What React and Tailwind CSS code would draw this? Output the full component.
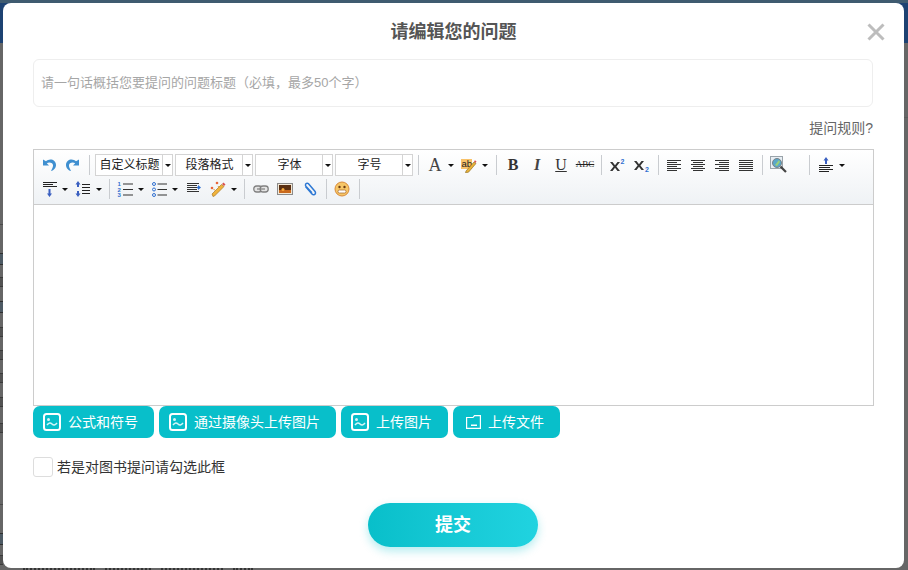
import React from "react";

const FONT = "font-['Liberation_Sans','Noto_Sans_CJK_SC',sans-serif]";

function Arrow() {
  return (
    <svg width="6" height="3" viewBox="0 0 6 3" className="shrink-0"><path d="M0 0h6L3 3z" fill="#111" /></svg>
  );
}

function Ico({ children, w = "w-[24px]" }) {
  return <div className={`${w} h-[24px] flex items-center justify-center shrink-0`}>{children}</div>;
}

function Drop() {
  return <div className="w-[10px] h-[24px] flex items-center pl-[1px] shrink-0"><Arrow /></div>;
}

function Sep({ w }) {
  return (
    <div className={`${w} h-[24px] flex items-center justify-center shrink-0`}>
      <div className="w-px h-[20px] bg-[#c9ccd0]" />
    </div>
  );
}

function Combo({ label, first }) {
  return (
    <div className={`w-[78px] h-[22px] flex border border-[#d4d4d4] bg-white shrink-0 ${first ? "" : "ml-[2px]"}`}>
      <div className="w-[67px] pl-[1px] text-center text-[12px] leading-[20px] text-[#222] border-r border-[#d4d4d4] whitespace-nowrap overflow-hidden">{label}</div>
      <div className="flex-1 flex items-center justify-center"><Arrow /></div>
    </div>
  );
}

const S = { width: 16, height: 16, viewBox: "0 0 16 16" };

const Undo = () => (
  <svg {...S}><path d="M2 2.500v6h6L5.800 6.300C7 5.200 9.500 5 11 6.300c1.400 1.200 1.300 3.300.2 5.200L10 14c3-.6 5-3.300 5-6 0-3.500-2.800-5.500-5.500-5.500-1.800 0-3.300.7-4.500 1.800z" fill="#3f8fd0" /></svg>
);
const Redo = () => (
  <svg {...S}><path d="M14 2.500v6H8l2.200-2.200C9 5.200 6.500 5 5 6.300c-1.400 1.200-1.300 3.300-.2 5.200L6 14c-3-.6-5-3.300-5-6 0-3.500 2.800-5.500 5.500-5.500 1.800 0 3.300.7 4.500 1.800z" fill="#3f8fd0" /></svg>
);
const Lines = ({ rows }) => (
  <svg {...S}>{rows.map(([x, y, w], i) => <rect key={i} x={x} y={y} width={w} height="1" fill="#333" />)}</svg>
);
const AlignL = () => <Lines rows={[[1, 3, 14], [1, 5, 10], [1, 7, 14], [1, 9, 10], [1, 11, 14], [1, 13, 10]]} />;
const AlignC = () => <Lines rows={[[1, 3, 14], [3, 5, 10], [1, 7, 14], [3, 9, 10], [1, 11, 14], [3, 13, 10]]} />;
const AlignR = () => <Lines rows={[[1, 3, 14], [5, 5, 10], [1, 7, 14], [5, 9, 10], [1, 11, 14], [5, 13, 10]]} />;
const AlignJ = () => <Lines rows={[[1, 3, 14], [1, 5, 14], [1, 7, 14], [1, 9, 14], [1, 11, 14], [1, 13, 14]]} />;

const FontColor = () => (
  <span className="font-['Liberation_Serif',serif] text-[18px] leading-[16px] text-[#444]">A</span>
);
const Highlight = () => (
  <svg {...S}>
    <rect x="0" y="2" width="11" height="10" fill="#f8c26a" />
    <text x=".5" y="10" fontSize="9.500" fontFamily="Liberation Sans" fill="#222">ab</text>
    <path d="M5 14 13 5l2 1.500L7.500 15.200 4.500 15.800z" fill="#e8b23a" stroke="#8a6a20" strokeWidth=".6" />
    <path d="M13 4.500l1-1.200 1.500 1.200-1 1.500z" fill="#d9534f" />
  </svg>
);
const Super = () => (
  <svg {...S}>
    <path d="M0 5h2.500L5 8.200 7.500 5H10L6.400 9.500 10 14H7.500L5 10.800 2.500 14H0l3.600-4.500z" fill="#333" />
    <text x="10.500" y="7" fontSize="7" fontWeight="bold" fontFamily="Liberation Sans" fill="#2f6fd0">2</text>
  </svg>
);
const Sub = () => (
  <svg {...S}>
    <path d="M0 4h2.500L5 7.200 7.500 4H10L6.400 8.500 10 13H7.500L5 9.800 2.500 13H0l3.600-4.500z" fill="#333" />
    <text x="11" y="14.500" fontSize="7" fontWeight="bold" fontFamily="Liberation Sans" fill="#2f6fd0">2</text>
  </svg>
);
const Search = () => (
  <svg width="18" height="18" viewBox="0 0 18 18">
    <rect x=".5" y=".5" width="12" height="12" fill="#e8eef3" stroke="#9aa3aa" />
    <circle cx="7" cy="7" r="4.500" fill="#5aa7c9" stroke="#7a8288" />
    <path d="M5 9l4-5 1 2-3 4z" fill="#9ad07a" />
    <path d="M10.500 10.500 16 16" stroke="#444" strokeWidth="2.200" />
  </svg>
);
const RowSpacingTop = () => (
  <svg {...S}>
    <path d="M8 0l2.500 3.500H9V7H7V3.500H5.500z" fill="#3a5fc0" />
    <rect x="1" y="8" width="14" height="1" fill="#222" />
    <rect x="1" y="10" width="11" height="1" fill="#222" />
    <rect x="1" y="12" width="14" height="1" fill="#222" />
    <rect x="1" y="14" width="10" height="1" fill="#222" />
  </svg>
);
const RowSpacingBottom = () => (
  <svg {...S}>
    <rect x="2" y="1" width="14" height="1" fill="#222" />
    <rect x="2" y="3" width="10" height="1" fill="#222" />
    <rect x="2" y="5" width="14" height="1" fill="#222" />
    <path d="M8.500 16 6 12.500h1.500V8h2v4.500H11z" fill="#3a5fc0" />
  </svg>
);
const LineHeight = () => (
  <svg width="16" height="16" viewBox="0 0 16 16">
    <path d="M3 0l2.500 3.500H4V6H2V3.500H.5zM3 16l2.500-3.500H4V10H2v2.500H.5z" fill="#3a5fc0" />
    <rect x="7" y="3" width="8" height="1" fill="#222" />
    <rect x="7" y="6" width="8" height="1" fill="#222" />
    <rect x="7" y="9" width="8" height="1" fill="#222" />
    <rect x="7" y="12" width="8" height="1" fill="#222" />
  </svg>
);
const Ol = () => (
  <svg {...S}>
    <g fill="#2f6fd0" fontSize="6" fontWeight="bold" fontFamily="Liberation Sans">
      <text x=".5" y="5">1</text><text x=".5" y="10.500">2</text><text x=".5" y="16">3</text>
    </g>
    <rect x="6" y="2.500" width="10" height="1" fill="#333" />
    <rect x="6" y="8" width="10" height="1" fill="#333" />
    <rect x="6" y="13.500" width="10" height="1" fill="#333" />
  </svg>
);
const Ul = () => (
  <svg {...S}>
    <g fill="none" stroke="#2f6fd0" strokeWidth="1">
      <circle cx="3" cy="3" r="1.500" /><circle cx="3" cy="8.500" r="1.500" /><circle cx="3" cy="14" r="1.500" />
    </g>
    <rect x="6.500" y="2.500" width="9.500" height="1" fill="#333" />
    <rect x="6.500" y="8" width="9.500" height="1" fill="#333" />
    <rect x="6.500" y="13.500" width="9.500" height="1" fill="#333" />
  </svg>
);
const Indent = () => (
  <svg {...S}>
    <rect x="2" y="2" width="12" height="1" fill="#333" />
    <rect x="2" y="4" width="10" height="1" fill="#333" />
    <rect x="2" y="6" width="10" height="1" fill="#333" />
    <rect x="2" y="8" width="10" height="1" fill="#333" />
    <rect x="2" y="10" width="12" height="1" fill="#333" />
    <path d="M16 6.500 13 4v1.700h-1v1.600h1V9z" fill="#2f6fd0" />
  </svg>
);
const Wand = () => (
  <svg {...S}>
    <path d="M3 15.500 2 13 11.500 3.500 14 5.500 4.500 15z" fill="#f0b33c" stroke="#a87a28" strokeWidth=".7" />
    <path d="M12 3l1.500-1.500 2 2L14 5z" fill="#d9534f" />
    <circle cx="2" cy="7" r="1.300" fill="#e8663c" />
    <circle cx="7" cy="2" r="1.300" fill="#e8663c" />
    <path d="M9 6.500 8 5M5 9 3.500 8.500" stroke="#e8a03c" />
  </svg>
);
const LinkIco = () => (
  <svg {...S}>
    <rect x=".8" y="5" width="8" height="6" rx="2.800" fill="#e4e4e4" stroke="#808080" strokeWidth="1.300" />
    <rect x="7.200" y="5" width="8" height="6" rx="2.800" fill="#e4e4e4" stroke="#808080" strokeWidth="1.300" />
    <rect x="4" y="7.400" width="8" height="1.200" fill="#808080" />
  </svg>
);
const ImageIco = () => (
  <svg {...S}>
    <rect x=".5" y="2.500" width="15" height="11" fill="#f3e9d8" stroke="#8b8b8b" />
    <rect x="2" y="4" width="12" height="8" fill="#5a2f12" />
    <path d="M2 9h12v3H2z" fill="#c96a1e" />
    <circle cx="6" cy="8.500" r="1.500" fill="#f6a83a" />
  </svg>
);
const Clip = () => (
  <svg {...S}>
    <path d="M3.500 5.500 10 13c1.500 1.700 3.800.5 3.500-1.500-.1-.6-.4-1-.8-1.500L6.500 2.800C5.300 1.500 3.200 2.600 3.500 4.300c.1.500.3.800.6 1.200l5.800 6.300" fill="none" stroke="#2d78d4" strokeWidth="1.500" />
  </svg>
);
const Emoji = () => (
  <svg {...S}>
    <circle cx="8" cy="8" r="7" fill="#f6c667" stroke="#d98a3a" />
    <circle cx="5.500" cy="6" r="1.200" fill="#6b3b12" />
    <circle cx="10.500" cy="6" r="1.200" fill="#6b3b12" />
    <rect x="4" y="9" width="8" height="3" rx="1.400" fill="#fff" stroke="#a0622a" strokeWidth=".7" />
  </svg>
);

function PicIcon() {
  return (
    <svg width="18" height="18" viewBox="0 0 18 18" fill="none" className="shrink-0">
      <rect x="1" y="1" width="16" height="16" rx="2.500" stroke="#fff" strokeWidth="2" />
      <circle cx="5.500" cy="6.500" r="1.500" fill="#d5f5f7" />
      <path d="M4 12c2-2.500 3.500-2.500 5-1s3 1.500 5-1" stroke="#d5f5f7" strokeWidth="1.500" />
    </svg>
  );
}
function FolderIcon() {
  return (
    <svg width="18" height="18" viewBox="0 0 18 18" fill="none" className="shrink-0">
      <path d="M3.600 15.400V4.500H10L11.500 2.600H17.400V15.400Z" stroke="#fff" strokeWidth="1.200" />
      <rect x="8" y="11.500" width="6" height="1.500" fill="#fff" />
    </svg>
  );
}

function TealBtn({ icon, label, cls }) {
  return (
    <div className={`h-[32px] rounded-[7px] bg-[#08bfca] flex items-center pl-[10px] gap-[7px] text-white text-[14px] shrink-0 ${cls}`}>
      {icon}
      <span className="whitespace-nowrap">{label}</span>
    </div>
  );
}

function Sliver({ cls }) {
  return <div className={`absolute left-0 w-[3px] h-[10px] border-y border-[#3a3a3a] bg-[#525252] ${cls}`} />;
}

export default function App() {
  return (
    <div className={`relative w-[908px] h-[570px] overflow-hidden bg-[#666666] ${FONT}`}>
      <div className="h-[43px] bg-[#1d4272] border-t-[3px] border-[#3f5b70]" />

      {/* edges of the dimmed page behind the dialog */}
      <Sliver cls="top-[277px]" />
      <Sliver cls="top-[327px]" />
      <Sliver cls="top-[350px]" />
      <Sliver cls="top-[373px]" />
      <Sliver cls="top-[397px]" />
      <Sliver cls="top-[423px]" />
      <Sliver cls="top-[555px]" />
      <div className="absolute left-0 top-[253px] w-[3px] h-[12px] bg-[#4d5a64] border-y border-[#2f2f2f]" />
      <div className="absolute left-0 top-[301px] w-[3px] h-[12px] bg-[#4d5a64] border-y border-[#2f2f2f]" />
      <div className="absolute left-0 top-[533px] w-[3px] h-[12px] bg-[#4d5a64] border-y border-[#2f2f2f]" />
      <div className="absolute left-0 top-[504px] w-[3px] h-px bg-[#4a4a4a]" />
      <div className="absolute left-0 top-[224px] w-[3px] h-px bg-[#4a4a4a]" />
      <div className="absolute right-0 top-[117px] w-[4px] h-px bg-[#5c5c5c]" />
      <div className="absolute left-[23px] top-[568px] flex gap-[10px]">
        <div className="w-[72px] h-[2px] border-t-2 border-dotted border-[#333333]" />
        <div className="w-[46px] h-[2px] border-t-2 border-dotted border-[#333333]" />
        <div className="w-[62px] h-[2px] border-t-2 border-dotted border-[#333333]" />
        <div className="w-[20px] h-[2px] border-t-2 border-dotted border-[#333333]" />
      </div>

      <div className="absolute left-[3px] top-[3px] w-[901px] h-[565px] bg-white rounded-[8px] pl-[30px] pr-[31px]">
        <div className="relative h-[56px] pt-[19px] pl-[1px] text-center text-[18px] leading-[20px] font-bold text-[#555]">
          请编辑您的问题
          <svg className="absolute right-[-12px] top-[20px]" width="18" height="18" viewBox="0 0 18 18">
            <path d="M1.500 1.500l15 15M16.500 1.500l-15 15" stroke="#bdbdbd" strokeWidth="3" />
          </svg>
        </div>

        <div className="h-[48px] border border-[#eeeeee] rounded-[6px] pl-[7px] flex items-center text-[13px] text-[#a6a6a6]">
          请一句话概括您要提问的问题标题（必填，最多50个字）
        </div>

        <div className="h-[42px] flex items-center justify-end text-[14px] text-[#666666]">提问规则?</div>

        <div className="border border-[#cccccc] h-[257px] mr-[-1px]">
          <div className="h-[55px] border-b border-[#cccccc] bg-gradient-to-b from-white to-[#eff2f5] pl-[3px] pt-[3px]">
            <div className="flex items-center h-[24px]">
              <Ico><Undo /></Ico>
              <Ico><Redo /></Ico>
              <Sep w="w-[9px]" />
              <div className="w-px shrink-0" />
              <Combo label="自定义标题" first />
              <Combo label="段落格式" />
              <Combo label="字体" />
              <Combo label="字号" />
              <Sep w="w-[10px]" />
              <Ico><FontColor /></Ico>
              <Drop />
              <Ico><Highlight /></Ico>
              <Drop />
              <Sep w="w-[10px]" />
              <Ico><span className="font-['Liberation_Serif',serif] font-bold text-[16px] text-[#333]">B</span></Ico>
              <Ico><span className="font-['Liberation_Serif',serif] italic font-bold text-[16px] text-[#444]">I</span></Ico>
              <Ico><span className="font-['Liberation_Serif',serif] underline text-[16px] text-[#333]">U</span></Ico>
              <Ico><span className="font-['Liberation_Serif',serif] line-through text-[9px] text-[#222]">ABC</span></Ico>
              <Sep w="w-[9px]" />
              <Ico><Super /></Ico>
              <Ico><Sub /></Ico>
              <Sep w="w-[8px]" />
              <Ico><AlignL /></Ico>
              <Ico><AlignC /></Ico>
              <Ico><AlignR /></Ico>
              <Ico><AlignJ /></Ico>
              <Sep w="w-[9px]" />
              <Ico><Search /></Ico>
              <div className="w-[13px] shrink-0" />
              <Sep w="w-[10px]" />
              <Ico><RowSpacingTop /></Ico>
              <Drop />
            </div>
            <div className="flex items-center h-[24px]">
              <Ico><RowSpacingBottom /></Ico>
              <Drop />
              <Ico><LineHeight /></Ico>
              <Drop />
              <Sep w="w-[8px]" />
              <Ico><Ol /></Ico>
              <Drop />
              <Ico><Ul /></Ico>
              <Drop />
              <Ico><Indent /></Ico>
              <Ico w="w-[25px]"><Wand /></Ico>
              <Drop />
              <Sep w="w-[9px]" />
              <Ico><LinkIco /></Ico>
              <Ico><ImageIco /></Ico>
              <Ico w="w-[25px]"><Clip /></Ico>
              <Sep w="w-[8px]" />
              <Ico><Emoji /></Ico>
              <Sep w="w-[10px]" />
            </div>
          </div>
        </div>

        <div className="flex gap-[5px]">
          <TealBtn icon={<PicIcon />} label="公式和符号" cls="w-[121px]" />
          <TealBtn icon={<PicIcon />} label="通过摄像头上传图片" cls="w-[177px]" />
          <TealBtn icon={<PicIcon />} label="上传图片" cls="w-[107px]" />
          <TealBtn icon={<FolderIcon />} label="上传文件" cls="w-[107px]" />
        </div>

        <div className="flex items-center gap-[4px] mt-[19px] h-[20px]">
          <div className="w-[20px] h-[20px] border border-[#dddddd] rounded-[3px] bg-white" />
          <span className="text-[14px] text-[#333333]">若是对图书提问请勾选此框</span>
        </div>

        <div className="flex justify-center mt-[26px]">
          <div className="w-[170px] h-[44px] pt-[1px] rounded-full bg-gradient-to-r from-[#08bfca] to-[#20d3e0] shadow-[0_4px_10px_rgba(8,191,202,0.3)] flex items-center justify-center text-white text-[18px] font-bold">
            提交
          </div>
        </div>
      </div>
    </div>
  );
}
